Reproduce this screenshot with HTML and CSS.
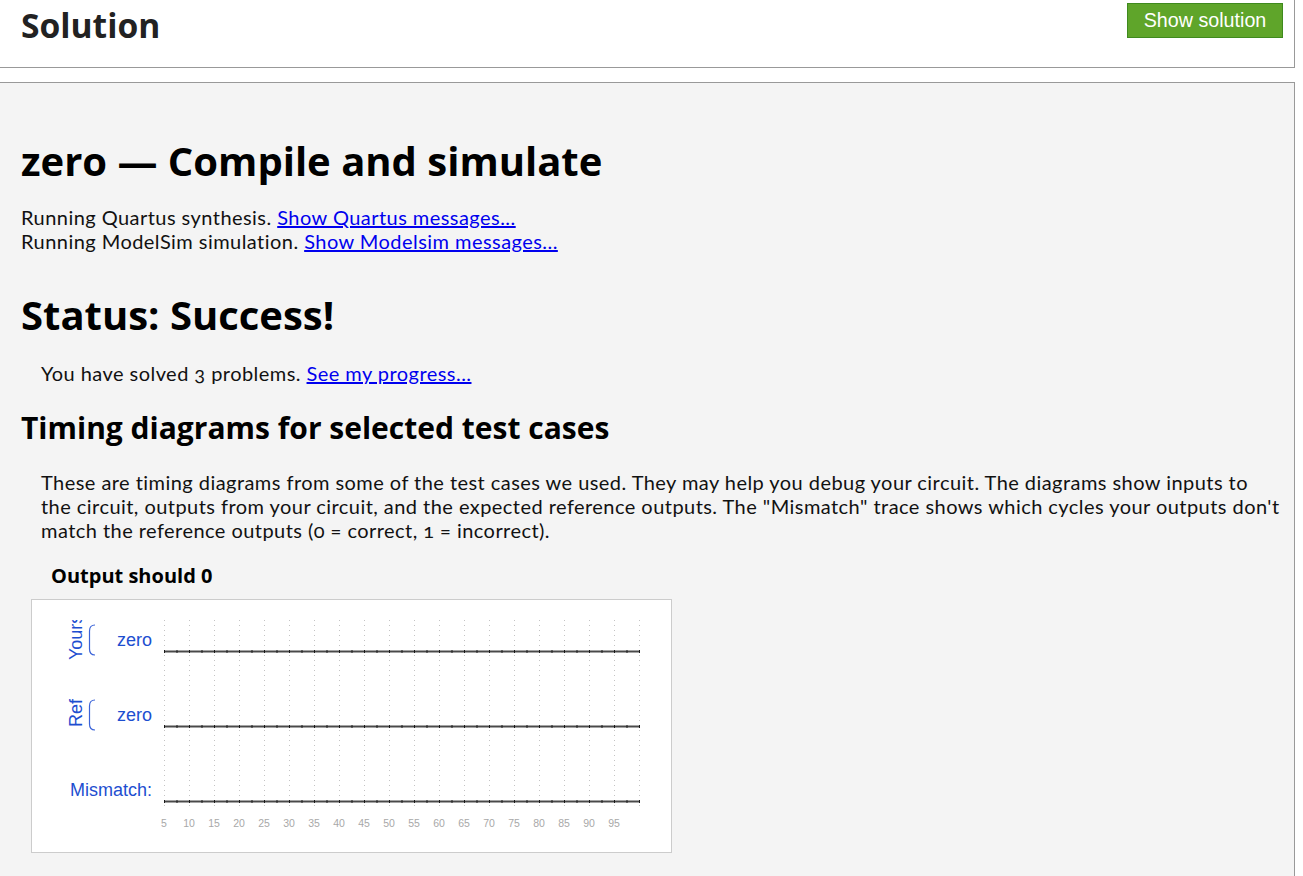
FILE: index.html
```html
<!DOCTYPE html>
<html>
<head>
<meta charset="utf-8">
<title>zero — Compile and simulate</title>
<link rel="stylesheet" href="styles.css">
</head>
<body>
<div class="topbox">
  <h2 class="title">Solution</h2>
  <button class="btn">Show solution</button>
</div>
<div class="main">
  <h1 class="h1">zero — Compile and simulate</h1>
  <div class="log">Running Quartus synthesis. <a href="#">Show Quartus messages...</a><br>Running ModelSim simulation. <a href="#">Show Modelsim messages...</a></div>
  <h1 class="h1 status">Status: Success!</h1>
  <div class="indent"><p class="solved">You have solved 3 problems. <a href="#">See my progress...</a></p></div>
  <h2 class="h2">Timing diagrams for selected test cases</h2>
  <div class="indent"><p class="desc">These are timing diagrams from some of the test cases we used. They may help you debug your circuit. The diagrams show inputs to the circuit, outputs from your circuit, and the expected reference outputs. The "Mismatch" trace shows which cycles your outputs don't match the reference outputs (0 = correct, 1 = incorrect).</p></div>
  <h3 class="h3">Output should 0</h3>
  <div class="wave">
    <svg width="639" height="252" viewBox="0 0 639 252" xmlns="http://www.w3.org/2000/svg">
      <defs>
        <clipPath id="clipY"><rect x="0" y="20" width="639" height="232"/></clipPath>
      </defs>
      <path class="grid" d="M132.5 20V208M157.5 20V208M182.5 20V208M207.5 20V208M232.5 20V208M257.5 20V208M282.5 20V208M307.5 20V208M332.5 20V208M357.5 20V208M382.5 20V208M407.5 20V208M432.5 20V208M457.5 20V208M482.5 20V208M507.5 20V208M532.5 20V208M557.5 20V208M582.5 20V208M607.5 20V208"/>
      <g class="sig">
        <line x1="132" y1="51.5" x2="608" y2="51.5"/>
        <line x1="132" y1="126.5" x2="608" y2="126.5"/>
        <line x1="132" y1="201.5" x2="608" y2="201.5"/>
      </g>
      <g class="ticks">
        <line x1="132" y1="51.5" x2="608" y2="51.5"/>
        <line x1="132" y1="126.5" x2="608" y2="126.5"/>
        <line x1="132" y1="201.5" x2="608" y2="201.5"/>
      </g>
      <g class="lbl">
        <text x="120" y="46" text-anchor="end">zero</text>
        <text x="120" y="121" text-anchor="end">zero</text>
        <text x="120" y="196" text-anchor="end">Mismatch:</text>
        <g clip-path="url(#clipY)">
          <text transform="translate(50,60) rotate(-90)">Yours</text>
        </g>
        <text transform="translate(50,127) rotate(-90)">Ref</text>
      </g>
      <path class="brk" d="M63 25Q57.5 25 57.5 31V49Q57.5 55 63 55"/>
      <path class="brk" d="M63 100Q57.5 100 57.5 106V124Q57.5 130 63 130"/>
      <g class="axis">
        <text x="132" y="226.5">5</text>
        <text x="157" y="226.5">10</text>
        <text x="182" y="226.5">15</text>
        <text x="207" y="226.5">20</text>
        <text x="232" y="226.5">25</text>
        <text x="257" y="226.5">30</text>
        <text x="282" y="226.5">35</text>
        <text x="307" y="226.5">40</text>
        <text x="332" y="226.5">45</text>
        <text x="357" y="226.5">50</text>
        <text x="382" y="226.5">55</text>
        <text x="407" y="226.5">60</text>
        <text x="432" y="226.5">65</text>
        <text x="457" y="226.5">70</text>
        <text x="482" y="226.5">75</text>
        <text x="507" y="226.5">80</text>
        <text x="532" y="226.5">85</text>
        <text x="557" y="226.5">90</text>
        <text x="582" y="226.5">95</text>
      </g>
    </svg>
  </div>
</div>
</body>
</html>
```

FILE: styles.css
```css
html, body {
  margin: 0;
  padding: 0;
  background: #ffffff;
  overflow: hidden;
}
body {
  font-family: "Lato", "Open Sans", sans-serif;
  font-size: 20px;
  letter-spacing: 0.45px;
  color: #111;
  font-variant-numeric: oldstyle-nums;
}
a { color: #0000ee; }

.topbox {
  box-sizing: border-box;
  width: 1296px;
  height: 69px;
  margin: -1px 0 0 -1px;
  border: 1px solid #999;
  background: #fff;
  display: flex;
  justify-content: space-between;
  align-items: flex-start;
  padding: 0 11px 0 21px;
}
.title {
  font-family: "Open Sans", sans-serif;
  font-weight: 700;
  font-size: 33.6px;
  letter-spacing: 0;
  color: #222;
  margin: 3px 0 0 0;
  line-height: 44px;
  font-variant-numeric: normal;
}
.btn {
  margin-top: 3px;
  width: 156px;
  height: 35px;
  background: #5fa52a;
  border: 1px solid #3f8a1e;
  color: #fff;
  font-family: "Liberation Sans", Arial, sans-serif;
  font-size: 19.7px;
  letter-spacing: 0;
  padding: 0;
}

.main {
  box-sizing: border-box;
  width: 1296px;
  margin: 14px 0 0 -1px;
  border: 1px solid #999;
  border-bottom: none;
  background: #f4f4f4;
  padding: 54px 13px 40px 21px;
  min-height: 800px;
}
.h1 {
  font-family: "Open Sans", sans-serif;
  font-weight: 700;
  font-size: 40px;
  line-height: 48px;
  letter-spacing: 0;
  color: #000;
  margin: 0 0 20px 0;
  font-variant-numeric: normal;
}
.status { margin: 38px 0 22px 0; }
.log {
  line-height: 24px;
}
.indent { padding-left: 20px; }
.indent p { margin: 0; line-height: 24px; }
.desc { max-width: 1240px; }
.h2 {
  font-family: "Open Sans", sans-serif;
  font-weight: 700;
  font-size: 30px;
  line-height: 36px;
  letter-spacing: 0;
  color: #000;
  margin: 25px 0 24px 0;
  font-variant-numeric: normal;
}
.h3 {
  font-family: "Open Sans", sans-serif;
  font-weight: 700;
  font-size: 20px;
  line-height: 24px;
  letter-spacing: 0;
  color: #000;
  margin: 22px 0 11px 30px;
  font-variant-numeric: normal;
}
.wave {
  margin-left: 10px;
  width: 639px;
  height: 252px;
  border: 1px solid #ccc;
  background: #fff;
  letter-spacing: 0;
}
.wave svg { display: block; }
.grid {
  fill: none;
  stroke: #c4c4c4;
  stroke-width: 1;
  stroke-dasharray: 1 4;
}
.sig line { stroke: #4a4a4a; stroke-width: 2; }
.ticks line { stroke: #1a1a1a; stroke-width: 3; stroke-dasharray: 1 11.5; }
.lbl text {
  font-family: "Liberation Sans", Arial, sans-serif;
  font-size: 18px;
  fill: #1d4ed0;
}
.brk { fill: none; stroke: #3a63d8; stroke-width: 1.2; }
.axis text {
  font-family: "Liberation Sans", Arial, sans-serif;
  font-size: 10.5px;
  fill: #a8a8a8;
  text-anchor: middle;
}
```
